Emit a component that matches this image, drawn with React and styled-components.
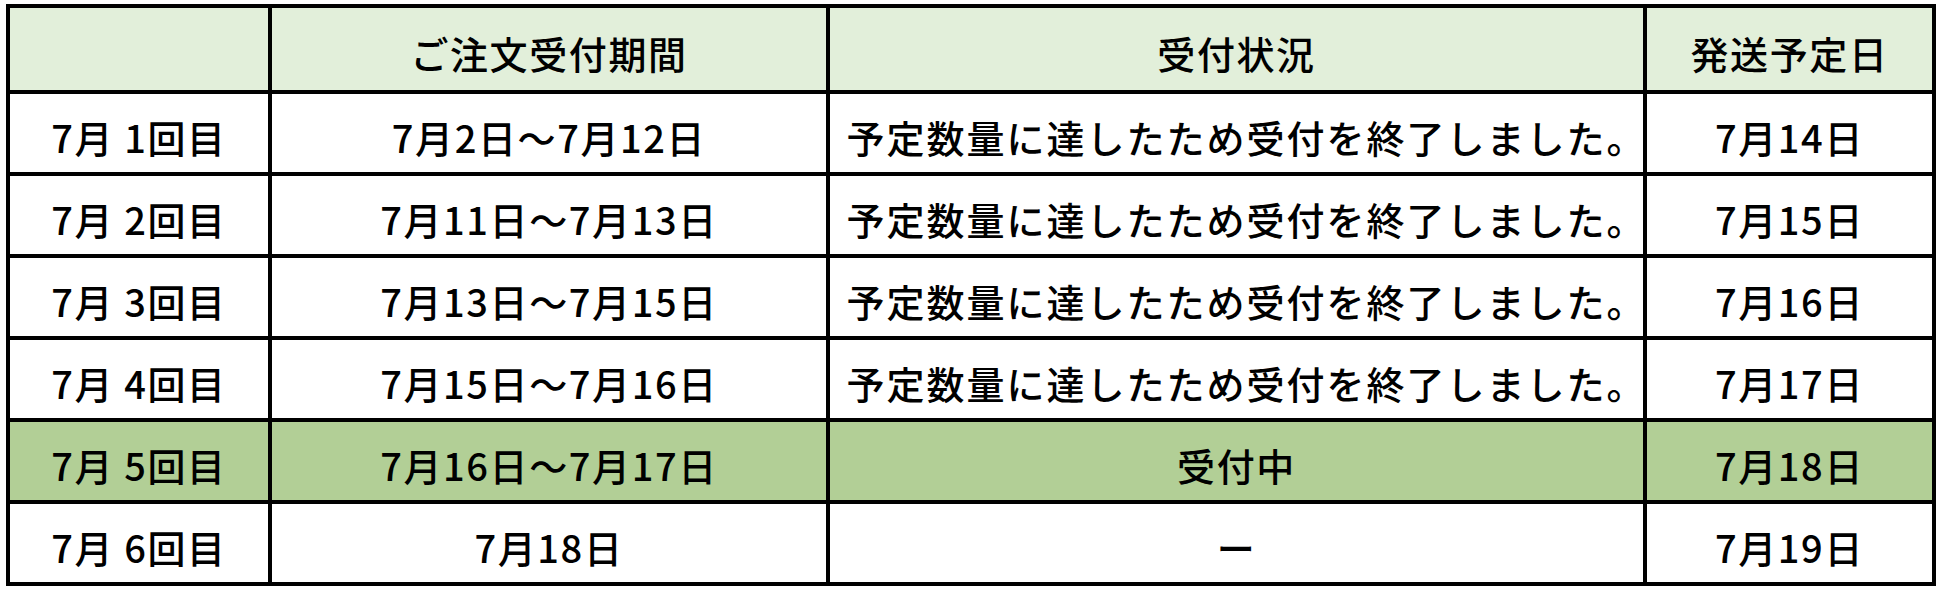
import React from 'react';
import styled, { createGlobalStyle } from 'styled-components';

const GlobalStyle = createGlobalStyle`
  body {
    margin: 0;
    background: #ffffff;
    font-family: "Noto Sans CJK JP", "Noto Sans", sans-serif;
  }
`;

const Page = styled.div`
  padding: 4px 0 0 6px;
`;

const Table = styled.div`
  display: grid;
  grid-template-columns: 258px 554px 813px 285px;
  grid-template-rows: 82px repeat(6, 78px);
  gap: 4px;
  padding: 4px;
  width: fit-content;
  background: #000000;
`;

const Cell = styled.div`
  display: flex;
  align-items: center;
  justify-content: center;
  padding-top: 6px;
  padding-left: ${props => (props.indent ? '20px' : '0')};
  box-sizing: border-box;
  background: ${props => props.bg};
  color: #000000;
  font-size: 38px;
  font-weight: 500;
  letter-spacing: ${props => (props.indent ? '2px' : '1.6px')};
  white-space: nowrap;
`;

const HEAD_BG = '#E2EFDA';
const ACTIVE_BG = '#B2CF96';

const headers = ['', 'ご注文受付期間', '受付状況', '発送予定日'];

const CLOSED = '予定数量に達したため受付を終了しました。';

const rows = [
  { round: '7月 1回目', period: '7月2日～7月12日', status: CLOSED, ship: '7月14日' },
  { round: '7月 2回目', period: '7月11日～7月13日', status: CLOSED, ship: '7月15日' },
  { round: '7月 3回目', period: '7月13日～7月15日', status: CLOSED, ship: '7月16日' },
  { round: '7月 4回目', period: '7月15日～7月16日', status: CLOSED, ship: '7月17日' },
  { round: '7月 5回目', period: '7月16日～7月17日', status: '受付中', ship: '7月18日', active: true },
  { round: '7月 6回目', period: '7月18日', status: 'ー', ship: '7月19日' },
];

function App() {
  return (
    <Page>
      <GlobalStyle />
      <Table>
        {headers.map((h, i) => (
          <Cell key={`h${i}`} bg={HEAD_BG}>{h}</Cell>
        ))}
        {rows.map((r) => {
          const bg = r.active ? ACTIVE_BG : '#ffffff';
          return (
            <React.Fragment key={r.round}>
              <Cell bg={bg}>{r.round}</Cell>
              <Cell bg={bg}>{r.period}</Cell>
              <Cell bg={bg} indent={r.status === CLOSED}>{r.status}</Cell>
              <Cell bg={bg}>{r.ship}</Cell>
            </React.Fragment>
          );
        })}
      </Table>
    </Page>
  );
}

export default App;
